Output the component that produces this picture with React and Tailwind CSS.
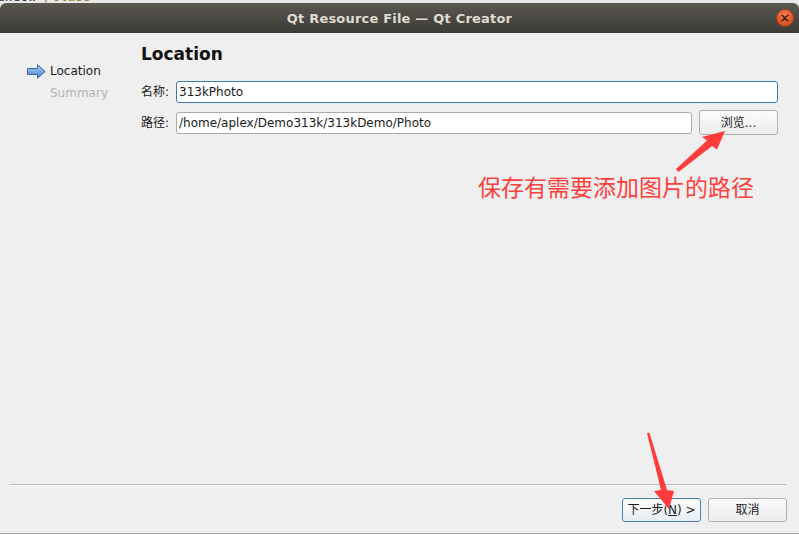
import React from 'react'

const ui = { fontFamily: '"DejaVu Sans", "Noto Sans CJK SC", sans-serif' }
const cjk = { fontFamily: '"Noto Sans CJK SC", "DejaVu Sans", sans-serif' }

const StepArrow = () => (
  <svg width="19" height="15" viewBox="0 0 19 15">
    <defs>
      <linearGradient id="ag" x1="0" y1="0" x2="0" y2="1">
        <stop offset="0" stopColor="#a9c8f0" />
        <stop offset="1" stopColor="#4f86d0" />
      </linearGradient>
    </defs>
    <polygon
      points="0.5,4.5 10.5,4.5 10.5,0.8 18.2,7.5 10.5,14.2 10.5,10.5 0.5,10.5"
      fill="url(#ag)"
      stroke="#3467a8"
      strokeWidth="1"
      strokeLinejoin="round"
    />
  </svg>
)

const CloseButton = () => (
  <svg width="18" height="18" viewBox="0 0 18 18">
    <defs>
      <radialGradient id="cg" cx="0.5" cy="0.35" r="0.65">
        <stop offset="0" stopColor="#f6824f" />
        <stop offset="1" stopColor="#d9451a" />
      </radialGradient>
    </defs>
    <circle cx="9" cy="9" r="8.5" fill="url(#cg)" stroke="#a8350f" strokeWidth="0.6" />
    <path d="M6.2 6.2 L11.8 11.8 M11.8 6.2 L6.2 11.8" stroke="#3a1a0c" strokeWidth="1.5" strokeLinecap="round" />
  </svg>
)

const Annotations = () => (
  <svg className="absolute inset-0 pointer-events-none" width="799" height="534" viewBox="0 0 799 534">
    {/* arrow to browse button */}
    <polygon points="676,169 678.5,172 712,146 717,149.5 725,131 702,137 707,140.5" fill="#ff3b3b" />
    {/* arrow to next button */}
    <polygon points="647,433 649.5,433 667,490 674,491 669,509 654,491 661,490" fill="#ff3b3b" />
  </svg>
)

export default function App() {
  return (
    <div className="relative w-[799px] h-[534px] overflow-hidden bg-[#e9e9e9]" style={ui}>
      {/* bit of editor behind the window */}
      <div className="h-[3px] overflow-hidden text-[13px] leading-[14px] whitespace-nowrap" style={{ fontFamily: '"DejaVu Sans Mono", monospace' }}>
        <div className="-mt-[10px] -ml-[3px]">
          <span className="text-[#222]">andow</span><span className="text-[#8a8a30]">&lt;/class&gt;</span>
        </div>
      </div>

      {/* title bar */}
      <div className="relative h-[30px] rounded-t-[6px] bg-gradient-to-b from-[#5a5750] to-[#3c3b37] flex items-center justify-center pt-[2px]">
        <span className="text-[13px] font-bold text-[#dfdbd2] tracking-[0.2px]">Qt Resource File — Qt Creator</span>
        <div className="absolute right-[5px] top-[6px]">
          <CloseButton />
        </div>
      </div>

      {/* window body */}
      <div className="h-[501px] bg-[#efefef] border-b border-[#a8a8a8] flex flex-col">
        <div className="flex flex-1">
          {/* wizard steps */}
          <div className="w-[141px] pt-[27px] pl-[27px] text-[12px]">
            <div className="flex items-center h-[22px]">
              <StepArrow />
              <span className="ml-[4px] text-[#1a1a1a]">Location</span>
            </div>
            <div className="h-[22px] flex items-center pl-[23px] text-[#b4b4b4]">Summary</div>
          </div>

          {/* page */}
          <div className="flex-1 pr-[21px] pt-[9px] text-[12px] text-[#1a1a1a]">
            <h1 className="text-[17px] font-bold leading-[24px] text-[#111]">Location</h1>
            <div className="mt-[15px] flex items-center h-[22px]">
              <span className="w-[35px]">名称:</span>
              <div className="flex-1 h-[22px] bg-white border border-[#3d7cb8] rounded-[3px] flex items-center px-[2px]">
                313kPhoto
              </div>
            </div>
            <div className="mt-[7px] flex items-center h-[25px]">
              <span className="w-[35px]">路径:</span>
              <div className="flex-1 h-[22px] bg-white border border-[#ababab] rounded-[3px] flex items-center px-[2px]">
                /home/aplex/Demo313k/313kDemo/Photo
              </div>
              <button className="ml-[7px] w-[79px] h-[25px] rounded-[3px] border border-[#b0b0b0] bg-gradient-to-b from-[#fbfbfb] to-[#ececec] text-[12px] text-[#1a1a1a]">
                浏览...
              </button>
            </div>
          </div>
        </div>

        {/* separator */}
        <div className="ml-[10px] mr-[12px] border-t border-[#b9b9b9] border-b border-b-[#fafafa]" />

        {/* buttons */}
        <div className="flex justify-end gap-[7px] pr-[12px] pt-[12px] pb-[11px] text-[12px] text-[#1a1a1a]">
          <button className="w-[79px] h-[24px] rounded-[3px] border border-[#4a80b8] bg-gradient-to-b from-[#fbfbfb] to-[#e9eef4]">
            下一步(<span className="underline">N</span>) &gt;
          </button>
          <button className="w-[79px] h-[24px] rounded-[3px] border border-[#b0b0b0] bg-gradient-to-b from-[#fbfbfb] to-[#ececec]">
            取消
          </button>
        </div>
      </div>

      {/* screenshot annotations */}
      <div className="absolute left-[478px] top-[171px] text-[23px] leading-[30px] text-[#ff3f3f] whitespace-nowrap" style={cjk}>
        保存有需要添加图片的路径
      </div>
      <Annotations />
    </div>
  )
}
